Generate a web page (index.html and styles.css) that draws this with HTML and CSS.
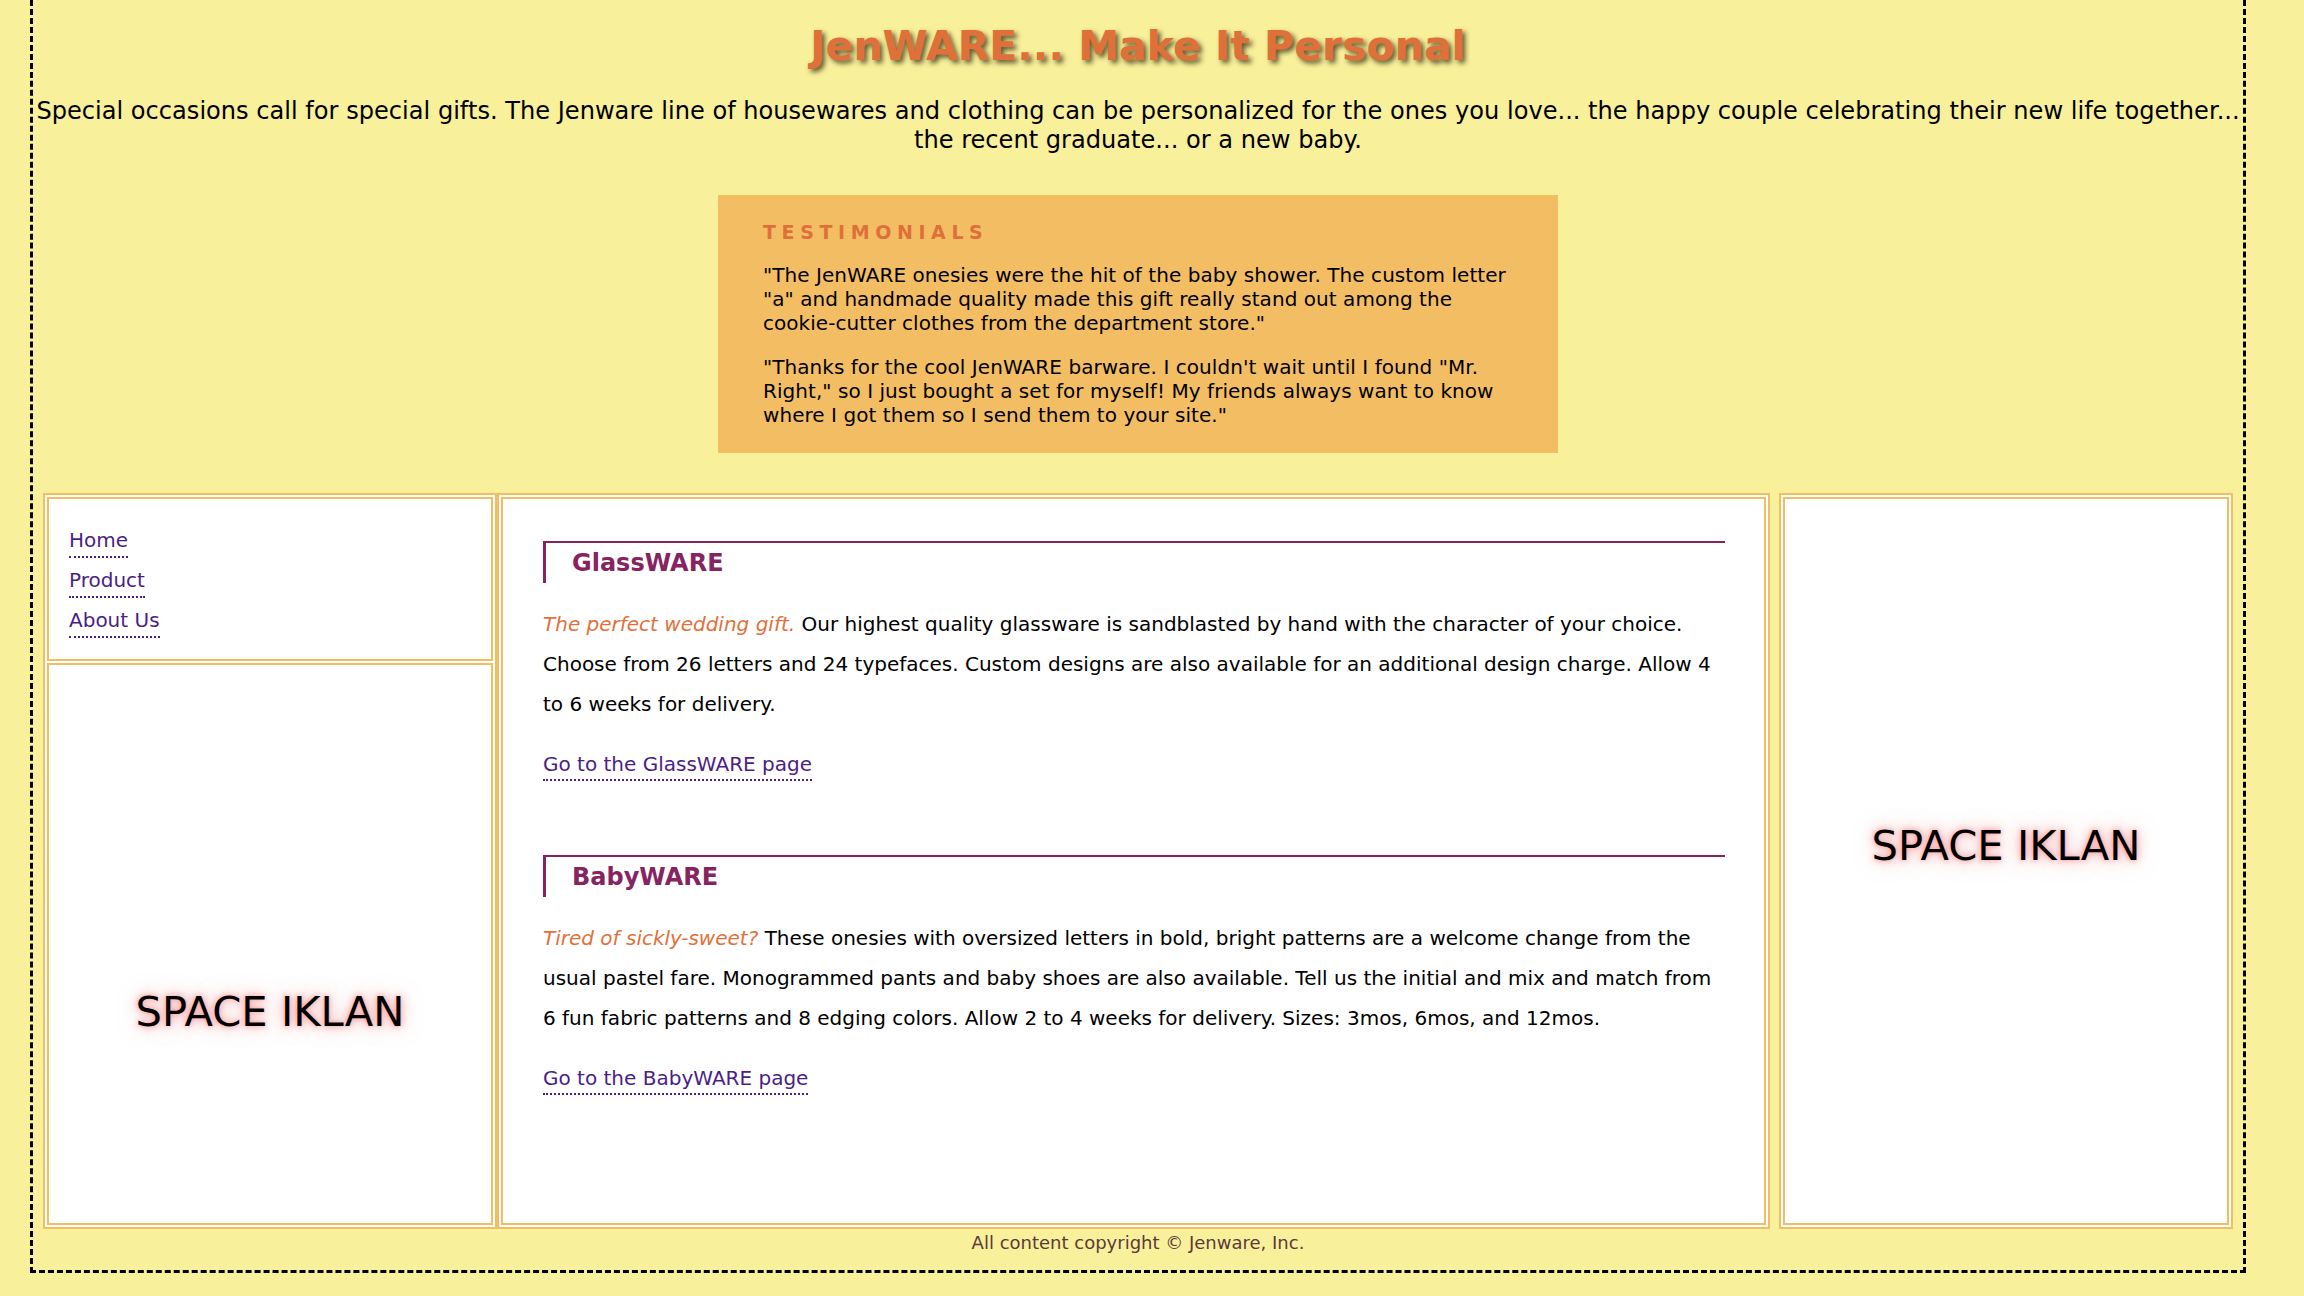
FILE: index.html
```html
<!DOCTYPE html>
<html lang="en">
<head>
<meta charset="utf-8">
<title>JenWARE... Make It Personal</title>
<link rel="stylesheet" href="styles.css">
</head>
<body>
<div class="page">
  <h1 class="title">JenWARE... Make It Personal</h1>
  <p class="intro">Special occasions call for special gifts. The Jenware line of housewares and clothing can be personalized for the ones you love... the happy couple celebrating their new life together... the recent graduate... or a new baby.</p>

  <div class="testimonials">
    <h3>TESTIMONIALS</h3>
    <p>"The JenWARE onesies were the hit of the baby shower. The custom letter "a" and handmade quality made this gift really stand out among the cookie-cutter clothes from the department store."</p>
    <p>"Thanks for the cool JenWARE barware. I couldn't wait until I found "Mr. Right," so I just bought a set for myself! My friends always want to know where I got them so I send them to your site."</p>
  </div>

  <div class="columns">
    <div class="box box-side">
      <div class="cell nav-cell">
        <ul class="nav">
          <li><a href="#">Home</a></li>
          <li><a href="#">Product</a></li>
          <li><a href="#">About Us</a></li>
        </ul>
      </div>
      <div class="cell ad-cell"><span class="ad">SPACE IKLAN</span></div>
    </div>

    <div class="box box-main">
      <div class="cell main-cell">
        <section class="product">
          <h2>GlassWARE</h2>
          <p><em>The perfect wedding gift. </em>Our highest quality glassware is sandblasted by hand with the character of your choice. Choose from 26 letters and 24 typefaces. Custom designs are also available for an additional design charge. Allow 4 to 6 weeks for delivery.</p>
          <p><a class="more" href="#">Go to the GlassWARE page</a></p>
        </section>
        <section class="product">
          <h2>BabyWARE</h2>
          <p><em>Tired of sickly-sweet? </em>These onesies with oversized letters in bold, bright patterns are a welcome change from the usual pastel fare. Monogrammed pants and baby shoes are also available. Tell us the initial and mix and match from 6 fun fabric patterns and 8 edging colors. Allow 2 to 4 weeks for delivery. Sizes: 3mos, 6mos, and 12mos.</p>
          <p><a class="more" href="#">Go to the BabyWARE page</a></p>
        </section>
      </div>
    </div>

    <div class="box box-side box-right">
      <div class="cell ad-cell"><span class="ad">SPACE IKLAN</span></div>
    </div>
  </div>

  <p class="footer">All content copyright &copy; Jenware, Inc.</p>
</div>
</body>
</html>
```

FILE: styles.css
```css
html, body {
  margin: 0;
  padding: 0;
  background: #f9f09b;
}

body {
  font-family: "DejaVu Sans", Verdana, sans-serif;
  color: #000;
}

.page {
  box-sizing: border-box;
  width: 2216px;
  margin-left: 30px;
  border: 3px dashed #000;
  border-top: 0;
  padding: 22px 0 17px;
}

.title {
  margin: 0;
  text-align: center;
  font-size: 41px;
  font-weight: bold;
  line-height: normal;
  color: #e0703a;
  text-shadow: 3px 3px 5px rgba(40, 38, 10, 0.75);
}

.intro {
  margin: 27px 0 0;
  text-align: center;
  font-size: 24.1px;
  line-height: 29px;
}

.testimonials {
  box-sizing: border-box;
  width: 840px;
  margin: 40px auto 0;
  padding: 26px 44px 26px 45px;
  background: #f3be63;
}

.testimonials h3 {
  margin: 0 0 1px;
  font-size: 19px;
  line-height: normal;
  letter-spacing: 5.6px;
  color: #e0703a;
}

.testimonials p {
  margin: 20px 0 0;
  font-size: 20px;
  line-height: 24px;
  letter-spacing: 0.05px;
}

.columns {
  display: flex;
  height: 736px;
  margin-top: 40px;
  padding: 0 10px;
}

.box {
  box-sizing: border-box;
  display: flex;
  flex-direction: column;
  gap: 2px;
  flex: none;
  padding: 2px;
  border: 2px solid #f3be63;
  background: #fff;
}

.box-side {
  width: 454px;
}

.box-main {
  width: 1273px;
}

.box-right {
  margin-left: 9px;
}

.cell {
  border: 2px solid #f3be63;
}

.nav-cell {
  padding: 30px 18px 21px 20px;
}

.nav {
  list-style: none;
  margin: 0;
  padding: 0;
}

.nav li {
  display: flex;
  margin-bottom: 11px;
}

.nav li:last-child {
  margin-bottom: 0;
}

.nav a {
  display: block;
  font-size: 20px;
  line-height: 23px;
  padding-bottom: 4px;
  border-bottom: 2px dotted #4b1e87;
  color: #4b1e87;
  text-decoration: none;
}

.ad-cell {
  flex: 1;
  padding-top: 322px;
  text-align: center;
}

.ad {
  font-size: 41.7px;
  line-height: normal;
  color: #000;
  text-shadow: 0 0 5px rgba(245, 130, 130, 0.75), 0 0 12px rgba(245, 140, 140, 0.7), 0 0 20px rgba(250, 170, 170, 0.5);
}

.main-cell {
  flex: 1;
  padding: 42px 39px 0 40px;
}

.product + .product {
  margin-top: 71px;
}

.product h2 {
  margin: 0;
  padding: 6px 0 6px 26px;
  border-top: 2px solid #862462;
  border-left: 3px solid #862462;
  font-size: 24px;
  font-weight: bold;
  line-height: normal;
  color: #862462;
}

.product p {
  margin: 20px 0 0;
  font-size: 20px;
  line-height: 40px;
}

.product h2 + p {
  margin-top: 21px;
}

.product em {
  color: #e3703a;
}

.more {
  color: #4b1e87;
  text-decoration: none;
  padding-bottom: 3px;
  border-bottom: 2px dotted #4b1e87;
}

.footer {
  margin: 3px 0 0;
  text-align: center;
  font-size: 18px;
  line-height: normal;
  color: #5c3a3a;
}
```
